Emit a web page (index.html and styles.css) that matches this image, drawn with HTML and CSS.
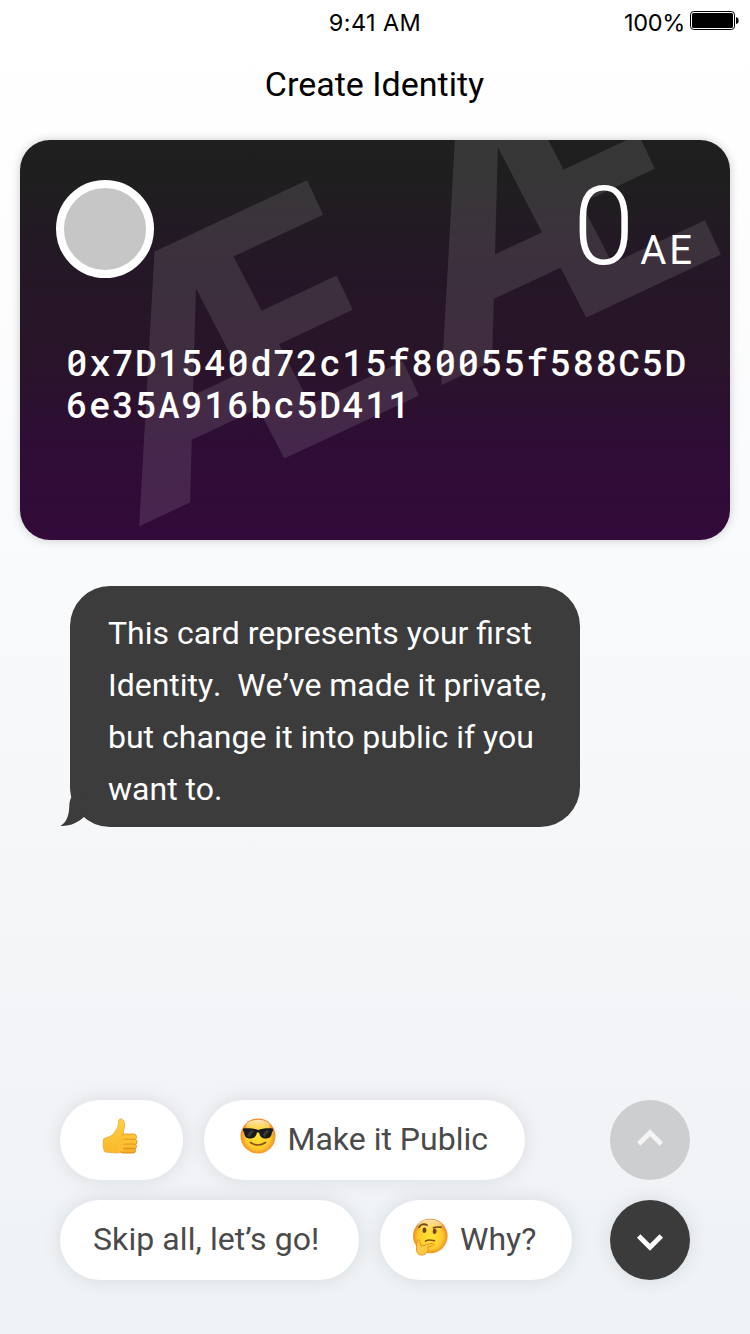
FILE: index.html
```html
<!DOCTYPE html>
<html lang="en">
<head>
<meta charset="utf-8">
<title>Create Identity</title>
<link rel="stylesheet" href="styles.css">
</head>
<body>
<main class="screen">
  <div class="status">
    <span class="status-time">9:41 AM</span>
    <span class="status-battery">
      <span class="percent">100%</span>
      <svg width="49" height="19" viewBox="0 0 49 19"><rect x=".5" y=".5" width="44" height="18" rx="3.2" fill="none" stroke="#000"/><rect x="2" y="2" width="41" height="15" rx="1.6"/><path d="M46 6.2c1.600 0 2.600.800 2.600 3.300s-1 3.300-2.600 3.300z"/></svg>
    </span>
  </div>
  <h1 class="title">Create Identity</h1>

  <section class="card">
    <svg class="watermark" viewBox="20 140 710 400">
      <text transform="translate(139.2 526.3) rotate(-25.05)" x="-1">Æ</text>
      <text transform="translate(441.2 385.3) rotate(-25.05)" x="-1">Æ</text>
    </svg>
    <div class="card-top">
      <span class="avatar"></span>
      <span class="balance"><span class="amount">0</span><span class="unit">AE</span></span>
    </div>
    <p class="address">0x7D1540d72c15f80055f588C5D<br>6e35A916bc5D411</p>
  </section>

  <div class="bubble">
    <svg class="tail" width="26" height="42" viewBox="60 786 26 42"><path d="M70 786L71.500 797C69.400 800 69.400 804 69.200 808C68.600 817 66 822.500 60.500 826C70 826.500 79 822 84.300 816.500L86 786Z"/></svg>
    <p>This card represents your first<br><span class="unkerned">Identity.&nbsp; We’ve made it private,</span><br>but change it into public if you<br>want to.</p>
  </div>

  <footer class="actions">
    <div class="replies">
      <div class="reply-row">
        <button class="reply reply-thumb" aria-label="OK">
          <svg width="36" height="36" viewBox="0 0 36 36">
            <defs><linearGradient id="hand" x2="0" y2="1"><stop offset="0" stop-color="#ffd044"/><stop offset="1" stop-color="#f9b82a"/></linearGradient></defs>
            <path d="M16.600 2.500C17 .300 21.300 0 22.300 4.200C23.200 8 21.600 11.500 21.200 16.500L21 34L15 35C10 35 6 34.200 3 34C.800 31 .600 25 1.800 20.500C6 19 9.500 18.500 11.500 15.500C13.500 12.500 16.700 10 16.600 2.500Z" fill="url(#hand)" stroke="#e9a52c" stroke-width=".7"/>
            <rect x="19.500" y="16" width="15" height="6" rx="3" fill="#ffc533" stroke="#e39a24" stroke-width=".9"/>
            <rect x="19" y="21.200" width="16" height="5.500" rx="2.700" fill="#ffc130" stroke="#dd9220" stroke-width=".9"/>
            <rect x="19.500" y="26" width="15" height="5" rx="2.500" fill="#fcbb2c" stroke="#dd9220" stroke-width=".9"/>
            <rect x="18.500" y="30.300" width="15" height="4.700" rx="2.300" fill="#f7b025" stroke="#d0851e" stroke-width=".9"/>
            <path d="M17 17.500H21.500V33.500H16Z" fill="#fcbf33"/>
          </svg>
        </button>
        <button class="reply reply-public">
          <svg width="36" height="36" viewBox="0 0 36 36">
            <defs><radialGradient id="face" cx=".5" cy=".52" r=".5"><stop offset="0" stop-color="#ffe334"/><stop offset=".7" stop-color="#fecb2a"/><stop offset="1" stop-color="#f08a28"/></radialGradient><linearGradient id="shine" x2="0" y2="1"><stop offset="0" stop-color="#fff3d0" stop-opacity=".9"/><stop offset="1" stop-color="#ffe070" stop-opacity=".1"/></linearGradient></defs>
            <circle cx="18" cy="18" r="17.500" fill="url(#face)"/>
            <ellipse cx="18" cy="8" rx="12" ry="6.200" fill="url(#shine)"/>
            <path d="M3 10.500C8 10 14 10.300 18 12C22 10.300 28 10 33 10.500V13L32 14C31.500 18.500 30 20.500 25.500 20.500C21 20.500 20 18 19 14.500H17C16 18 15 20.500 10.500 20.500C6 20.500 4.500 18.500 4 14L3 13Z" fill="#17191a"/>
            <path d="M7 17L11 12.200L14.500 12.800L9 19.200ZM22.500 17L26 12.200L29.500 12.300L24.500 19.200Z" fill="#55585a" opacity=".5"/>
            <path d="M10.500 24.500Q18 29.500 25.500 24.500" fill="none" stroke="#87501c" stroke-width="1.700" stroke-linecap="round"/>
          </svg>
          <span>Make it Public</span>
        </button>
      </div>
      <div class="reply-row">
        <button class="reply reply-skip"><span>Skip all, let’s go!</span></button>
        <button class="reply reply-why">
          <svg width="36" height="38" viewBox="0 0 36 38">
            <circle cx="18.300" cy="18" r="17.300" fill="url(#face)"/>
            <ellipse cx="18" cy="8" rx="12" ry="6.500" fill="url(#shine)"/>
            <path d="M7 9.300C8.500 6.200 12 5.500 15 7" fill="none" stroke="#754a21" stroke-width="1.800" stroke-linecap="round"/>
            <path d="M21.500 9.800C24 8.500 26.500 9 29 9.200" fill="none" stroke="#754a21" stroke-width="1.700" stroke-linecap="round"/>
            <ellipse cx="12.500" cy="12.300" rx="1.900" ry="2.800" fill="#70441b"/><ellipse cx="22.700" cy="13.300" rx="1.900" ry="2.800" fill="#70441b"/>
            <path d="M13.500 23.200C16 21.300 19.500 21.800 22.500 22.800" fill="none" stroke="#87501c" stroke-width="1.500" stroke-linecap="round"/>
            <path d="M5 23C5.800 21.600 7.500 22 7.800 23.500L9 28C13 27.500 16.500 25.500 20.500 25.500C22.500 25.600 22.300 27.600 20.500 27.900L15.800 29C17 31 15.800 34 14 35.500C11.500 37.700 7.500 37.500 5.800 35.500C3.700 33 4.500 27 5 23Z" fill="#ffcb3e" stroke="#e08d25" stroke-width=".9"/>
          </svg>
          <span>Why?</span>
        </button>
      </div>
    </div>
    <div class="pager">
      <button class="page page-up" aria-label="Previous"><svg width="28" height="18" viewBox="0 0 28 18"><path d="M2.700 15L14 3.700L25.300 15"/></svg></button>
      <button class="page page-down" aria-label="Next"><svg width="28" height="18" viewBox="0 0 28 18"><path d="M2.700 3L14 14.300L25.300 3"/></svg></button>
    </div>
  </footer>
</main>
</body>
</html>
```

FILE: styles.css
```css
* { box-sizing: border-box; }
body { margin: 0; font-family: Roboto, sans-serif; }
p, h1 { margin: 0; }

.screen {
  width: 750px;
  height: 1334px;
  display: flex;
  flex-direction: column;
  overflow: hidden;
  background: linear-gradient(#fff 0, #fefefe 12%, #f9fafc 42%, #f5f6f8 68%, #f2f3f7 83%, #eff3f6 94%, #eff3f6 100%);
}

.status {
  height: 40px;
  display: grid;
  grid-template-columns: 1fr auto 1fr;
  align-items: center;
  padding: 5px 11px 0 11px;
  font-family: Inter, sans-serif;
  font-size: 23.5px;
  line-height: 36px;
}
.status-time { grid-column: 2; letter-spacing: .4px; }
.percent { letter-spacing: -.3px; }
.status-battery {
  display: flex;
  justify-content: flex-end;
  align-items: center;
  gap: 5px;
}
.status-battery svg { margin-top: -5px; }

.title {
  height: 100px;
  padding: 24px 1px 0 0;
  text-align: center;
  font-size: 34px;
  font-weight: 400;
  line-height: 40px;
}

.card {
  position: relative;
  height: 400px;
  margin: 0 20px;
  padding: 40px 36px 0;
  border-radius: 30px;
  overflow: hidden;
  color: #fff;
  background: linear-gradient(#1e1f1e 0, #201e20 13%, #241726 30%, #291429 55%, #2e0d35 75%, #330a3a 100%);
  box-shadow: 0 0 10px rgba(0, 0, 0, .2);
}
.watermark { position: absolute; inset: 0; width: 710px; height: 400px; }
.watermark text { font: 700 341px Roboto, sans-serif; fill: #fff; fill-opacity: .11; }
.card-top {
  position: relative;
  height: 161px;
  display: flex;
  justify-content: space-between;
  align-items: flex-start;
}
.avatar {
  width: 98px;
  height: 98px;
  border: 8px solid #fff;
  border-radius: 50%;
  background: #c6c6c6;
}
.balance { display: flex; align-items: baseline; padding-top: 1px; line-height: 92px; }
.amount { font-size: 110px; font-weight: 300; }
.unit { font-size: 40px; letter-spacing: 3px; margin-left: 6px; margin-right: -1px; }
.address {
  position: relative;
  padding-left: 10px;
  font-family: "Roboto Mono", "Liberation Mono", monospace;
  font-size: 36px;
  font-weight: 500;
  line-height: 42px;
  letter-spacing: 1.420px;
  white-space: nowrap;
}

.bubble {
  position: relative;
  width: 510px;
  height: 240.500px;
  margin: 46px 0 0 70px;
  padding: 21px 0 0 38px;
  border-radius: 40px;
  background: #3c3c3c;
  color: #fff;
  font-size: 32px;
  line-height: 52px;
  white-space: nowrap;
}
.unkerned { font-kerning: none; letter-spacing: -.03px; }
.tail { position: absolute; left: -10px; top: 200px; fill: #3c3c3c; }

.actions {
  margin: auto 60px 54px;
  display: flex;
  justify-content: space-between;
}
.replies, .pager { display: flex; flex-direction: column; gap: 20px; }
.reply-row { display: flex; gap: 21px; }
button { border: 0; padding: 0; font: inherit; }
.reply {
  height: 80px;
  display: flex;
  align-items: center;
  padding-bottom: 2px;
  border-radius: 40px;
  background: #fff;
  color: #4a4a4a;
  font-size: 32px;
  line-height: 40px;
  white-space: nowrap;
  box-shadow: 0 0 20px rgba(0, 0, 0, .1);
}
.reply svg { margin-top: -6px; flex: none; }
.reply-thumb { width: 123px; padding-left: 42px; }
.reply-public { width: 321px; padding-left: 36px; gap: 11.500px; }
.reply-skip { width: 299px; padding-left: 33px; letter-spacing: .08px; }
.reply-why { width: 192px; padding-left: 32px; gap: 12px; }
.reply-why svg { margin-top: -4px; }

.page {
  width: 80px;
  height: 80px;
  display: flex;
  align-items: center;
  justify-content: center;
  border-radius: 50%;
}
.page path { fill: none; stroke: #fff; stroke-width: 4.800; }
.page-up { background: #cdced0; }
.page-up svg { margin-top: -5px; opacity: .8; }
.page-down { background: #3b3b3b; box-shadow: 0 0 20px rgba(0, 0, 0, .1); }
.page-down svg { margin-top: 4px; }
```
